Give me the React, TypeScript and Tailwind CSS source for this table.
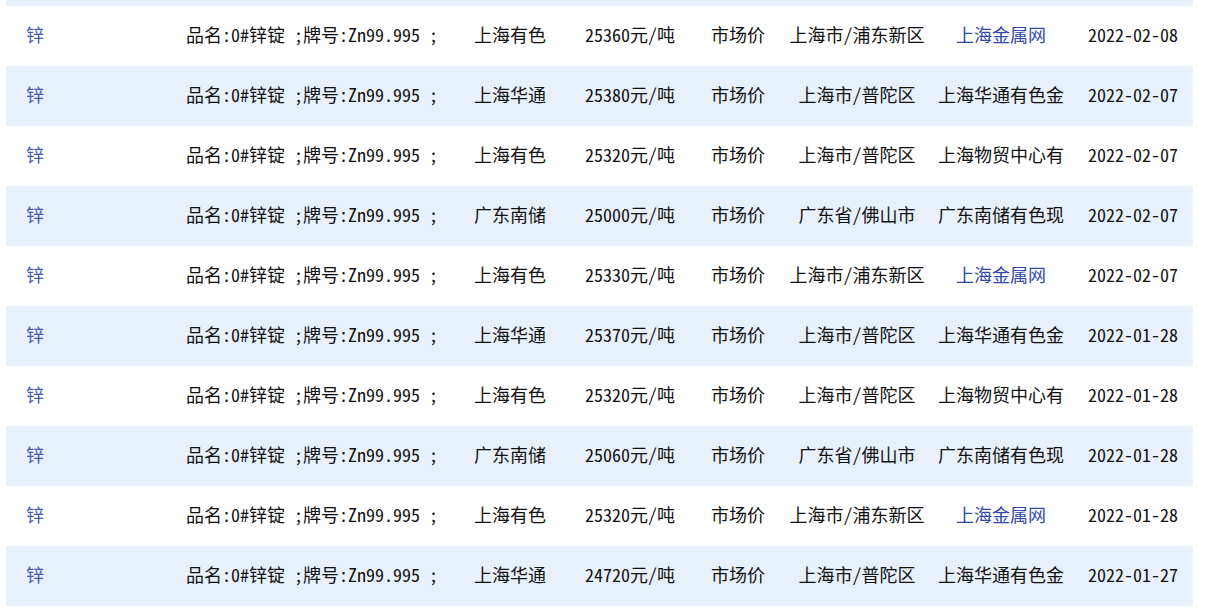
import React from "react";

type Row = {
  place: string;
  price: string;
  area: string;
  src: string;
  link: boolean;
  date: string;
};

const rows: Row[] = [
  { place: "上海有色", price: "25360", area: "上海市/浦东新区", src: "上海金属网", link: true, date: "2022-02-08" },
  { place: "上海华通", price: "25380", area: "上海市/普陀区", src: "上海华通有色金", link: false, date: "2022-02-07" },
  { place: "上海有色", price: "25320", area: "上海市/普陀区", src: "上海物贸中心有", link: false, date: "2022-02-07" },
  { place: "广东南储", price: "25000", area: "广东省/佛山市", src: "广东南储有色现", link: false, date: "2022-02-07" },
  { place: "上海有色", price: "25330", area: "上海市/浦东新区", src: "上海金属网", link: true, date: "2022-02-07" },
  { place: "上海华通", price: "25370", area: "上海市/普陀区", src: "上海华通有色金", link: false, date: "2022-01-28" },
  { place: "上海有色", price: "25320", area: "上海市/普陀区", src: "上海物贸中心有", link: false, date: "2022-01-28" },
  { place: "广东南储", price: "25060", area: "广东省/佛山市", src: "广东南储有色现", link: false, date: "2022-01-28" },
  { place: "上海有色", price: "25320", area: "上海市/浦东新区", src: "上海金属网", link: true, date: "2022-01-28" },
  { place: "上海华通", price: "24720", area: "上海市/普陀区", src: "上海华通有色金", link: false, date: "2022-01-27" },
];

export default function App() {
  return (
    <div
      className="w-[1229px] h-[616px] bg-white overflow-hidden text-[18px] leading-none font-light text-[#111111]"
      style={{ fontFamily: '"Noto Sans Mono CJK SC", "Noto Sans CJK SC", "Liberation Mono", monospace' }}
    >
      <div className="ml-[6px] w-[1187px]">
        <div className="h-[6px] bg-[#e8f0fc]" />
        {rows.map((r, i) => (
          <div
            key={i}
            className={
              "grid grid-cols-[167px_278px_118px_122px_94px_144px_144px_120px] h-[60px] pb-[4px] items-center whitespace-nowrap " +
              (i % 2 === 1 ? "bg-[#e8f0fc]" : "bg-white")
            }
          >
            <div className="pl-[20px] text-[#4858b0]">锌</div>
            <div className="text-center">品名:0#锌锭 ;牌号:Zn99.995 ;</div>
            <div className="text-center">{r.place}</div>
            <div className="text-center">{r.price}元/吨</div>
            <div className="text-center">市场价</div>
            <div className="text-center">{r.area}</div>
            <div className={"text-center " + (r.link ? "text-[#3048a8]" : "")}>{r.src}</div>
            <div className="text-center">{r.date}</div>
          </div>
        ))}
      </div>
    </div>
  );
}
